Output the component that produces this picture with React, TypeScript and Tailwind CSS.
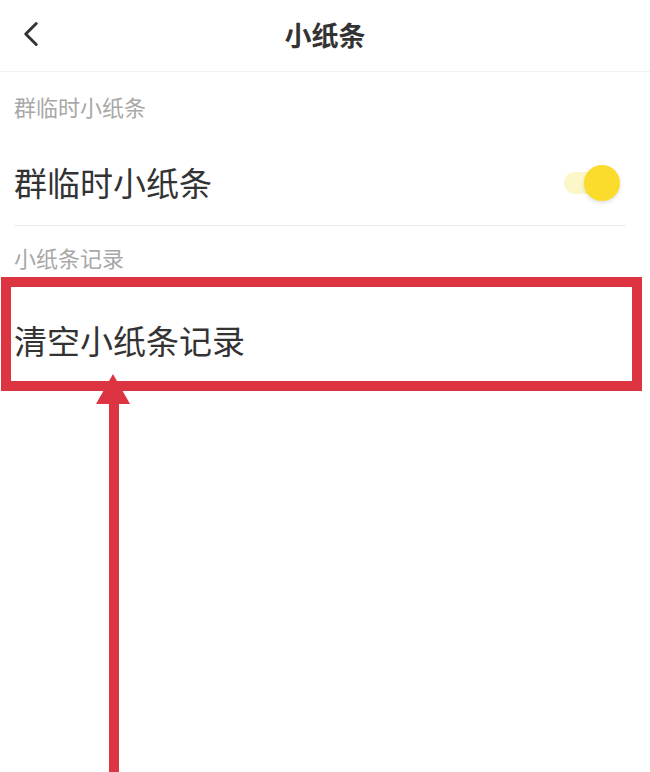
import { ChevronLeft } from 'lucide-react'

const font = { fontFamily: '"Noto Sans CJK SC", "Noto Sans", sans-serif' }

function Toggle() {
  return (
    <div className="relative w-[60px] h-[40px] flex items-center">
      <div className="absolute left-[2px] right-[14px] h-[22px] rounded-full bg-[#fbf7c8]" />
      <div className="absolute right-[2px] w-[36px] h-[36px] rounded-full bg-[#fbdc2c] shadow-[0_2px_4px_rgba(0,0,0,0.12)]" />
    </div>
  )
}

export default function App() {
  return (
    <div className="relative w-[650px] h-[772px] bg-white overflow-hidden text-[#333]" style={font}>
      {/* header */}
      <div className="h-[72px] flex items-center justify-center relative border-b border-[#f1f1f1]">
        <ChevronLeft className="absolute left-[10px] top-[13px] text-[#333]" size={42} strokeWidth={1.7} />
        <span className="text-[27px] font-bold">小纸条</span>
      </div>

      <div className="h-[68px] flex items-center px-[14px] pt-[1px] text-[22px] text-[#a8a8a8]">群临时小纸条</div>

      <div className="ml-[14px] mr-[24px] h-[86px] flex items-center justify-between border-b border-[#ececec] pr-[4px]">
        <span className="text-[33px]">群临时小纸条</span>
        <Toggle />
      </div>

      <div className="h-[62px] flex items-center px-[14px] text-[22px] text-[#a8a8a8]">小纸条记录</div>

      <div className="h-[105px] flex items-center px-[14px] text-[33px]">清空小纸条记录</div>

      {/* annotation */}
      <div className="absolute left-[1px] top-[277px] w-[641px] h-[114px] border-[10px] border-[#dd3442]" />
      <div className="absolute left-[109px] top-[398px] w-[10px] h-[380px] bg-[#dd3442]" />
      <svg className="absolute left-[96px] top-[374px]" width="34" height="30" viewBox="0 0 34 30">
        <polygon points="17,0 34,30 0,30" fill="#dd3442" />
      </svg>
    </div>
  )
}
